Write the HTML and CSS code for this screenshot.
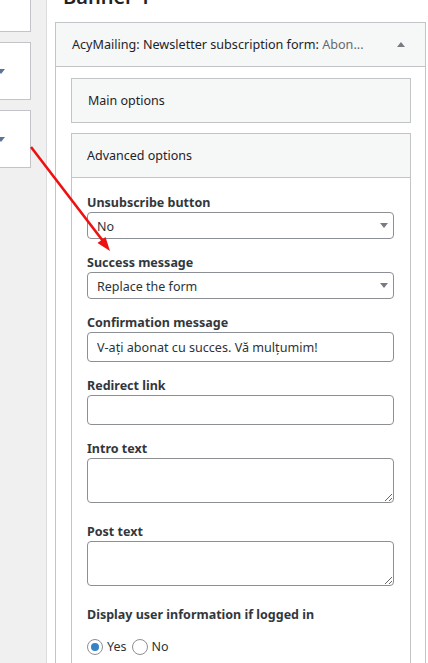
FILE: index.html
```html
<!DOCTYPE html>
<html lang="en">
<head>
    <meta charset="UTF-8">
    <meta name="viewport" content="width=device-width, initial-scale=1.0">
    <title>Banner 1 - AcyMailing</title>
    <link rel="stylesheet" href="styles.css">
</head>
<body>

<aside class="sidebar">
    <div class="side-box first"></div>
    <div class="side-box"><span class="side-caret"></span></div>
    <div class="side-box"><span class="side-caret"></span></div>
</aside>

<main class="content">
    <h2 class="area-title">Banner 1</h2>

    <section class="widget">
        <div class="widget-top">
            <span class="widget-title">AcyMailing: Newsletter subscription form: <span class="widget-name">Abon...</span></span>
            <span class="widget-toggle"></span>
        </div>

        <div class="widget-inside">
            <div class="section-box closed">Main options</div>

            <div class="section-box open">
                <div class="section-head">Advanced options</div>
                <div class="section-body">
                    <div class="field">
                        <label for="unsub">Unsubscribe button</label>
                        <div class="select-wrap">
                            <select id="unsub">
                                <option>No</option>
                                <option>Yes</option>
                            </select>
                        </div>
                    </div>

                    <div class="field">
                        <label for="success">Success message</label>
                        <div class="select-wrap">
                            <select id="success">
                                <option>Replace the form</option>
                                <option>Display above the form</option>
                            </select>
                        </div>
                    </div>

                    <div class="field">
                        <label for="confirm">Confirmation message</label>
                        <input type="text" id="confirm" value="V-ați abonat cu succes. Vă mulțumim!">
                    </div>

                    <div class="field">
                        <label for="redirect">Redirect link</label>
                        <input type="text" id="redirect">
                    </div>

                    <div class="field tall">
                        <label for="intro">Intro text</label>
                        <textarea id="intro"></textarea>
                    </div>

                    <div class="field tall">
                        <label for="post">Post text</label>
                        <textarea id="post"></textarea>
                    </div>

                    <div class="field">
                        <label>Display user information if logged in</label>
                        <div class="radios">
                            <label class="radio"><input type="radio" name="userinfo" checked> Yes</label>
                            <label class="radio"><input type="radio" name="userinfo"> No</label>
                        </div>
                    </div>
                </div>
            </div>
        </div>
    </section>
</main>

<!-- annotation arrow drawn over the screenshot -->
<svg class="arrow" width="428" height="663" viewBox="0 0 428 663">
    <line x1="31" y1="147" x2="103" y2="241" stroke="#ee1111" stroke-width="2.6"/>
    <polygon points="110,251 97.5,243 105.5,236.9" fill="#ee1111"/>
</svg>

</body>
</html>
```

FILE: styles.css
```css
* {
    box-sizing: border-box;
}
body {
    font-family: "Noto Sans", "Open Sans", sans-serif;
    font-size: 12.5px;
    color: #1d2327;
    margin: 0;
    padding: 0;
    height: 663px;
    overflow: hidden;
    display: flex;
    background: #fff;
}

/* left column with collapsed areas */
.sidebar {
    width: 47px;
    flex-shrink: 0;
    background-color: #f0f0f1;
    border-right: 1px solid #dcdcde;
}
.side-box {
    width: 41px;
    height: 58px;
    margin-left: -10px;
    margin-bottom: 10px;
    padding-left: 6px;
    background: #fff;
    border: 1px solid #c3c4c7;
    display: flex;
    align-items: center;
}
.side-box.first {
    height: 62px;
    margin-top: -30px;
}
.side-caret {
    width: 0;
    height: 0;
    border-left: 4px solid transparent;
    border-right: 4px solid transparent;
    border-top: 5px solid #5d7593;
}

/* main area */
.content {
    flex: 1;
    padding: 0 2px 0 8px;
}
.area-title {
    font-size: 20px;
    font-weight: 600;
    line-height: 26px;
    margin: -16px 0 12px 8px;
    color: #1d2327;
}

.widget {
    border: 1px solid #c3c4c7;
    background: #fff;
}
.widget-top {
    height: 44px;
    padding: 0 20px 0 16px;
    background-color: #f6f7f7;
    border-bottom: 1px solid #c3c4c7;
    display: flex;
    align-items: center;
    justify-content: space-between;
}
.widget-title {
    font-size: 12.6px;
    white-space: nowrap;
}
.widget-name {
    color: #646970;
}
.widget-toggle {
    width: 0;
    height: 0;
    border-left: 4px solid transparent;
    border-right: 4px solid transparent;
    border-bottom: 5px solid #787c82;
}
.widget-inside {
    padding: 11px 14px 0 15px;
}

.section-box {
    border: 1px solid #c3c4c7;
    background-color: #f6f7f7;
}
.section-box.closed {
    height: 45px;
    padding-left: 16px;
    display: flex;
    align-items: center;
}
.section-box.open {
    margin-top: 10px;
}
.section-head {
    height: 44px;
    padding-left: 15px;
    display: flex;
    align-items: center;
    border-bottom: 1px solid #c3c4c7;
}
.section-body {
    background: #fff;
    padding: 15px 16px 20px 15px;
}

/* form fields */
.field {
    margin-bottom: 14px;
}
.field.tall {
    margin-bottom: 19px;
}
.field > label {
    display: block;
    font-weight: 700;
    line-height: 18px;
    padding-top: 1px;
    margin-bottom: 0;
    color: #32373c;
}
.select-wrap {
    position: relative;
}
.select-wrap::after {
    content: "";
    position: absolute;
    right: 6px;
    top: 11px;
    border-left: 4px solid transparent;
    border-right: 4px solid transparent;
    border-top: 5px solid #787c82;
}
select, input[type="text"], textarea {
    display: block;
    width: 100%;
    font-family: inherit;
    color: #2c3338;
    background: #fff;
    border: 1px solid #8c8f94;
    border-radius: 4px;
    margin: 0;
}
select {
    appearance: none;
    height: 27px;
    padding: 1px 24px 0 9px;
    font-size: 12.5px;
}
input[type="text"] {
    height: 30px;
    padding: 1px 9px 0;
    font-size: 12.6px;
}
textarea {
    height: 45px;
    resize: vertical;
}

.radios {
    margin-top: 14px;
    display: flex;
    align-items: center;
    gap: 5px;
}
.radio {
    display: flex;
    align-items: center;
    gap: 4px;
    font-size: 12.5px;
    color: #2c3338;
}
.radio input {
    appearance: none;
    width: 16px;
    height: 16px;
    margin: 0;
    border: 1px solid #8c8f94;
    border-radius: 50%;
    background: #fff;
    display: flex;
    align-items: center;
    justify-content: center;
}
.radio input:checked::before {
    content: "";
    width: 8px;
    height: 8px;
    border-radius: 50%;
    background: #3582c4;
}

.arrow {
    position: absolute;
    top: 0;
    left: 0;
    pointer-events: none;
}
```
